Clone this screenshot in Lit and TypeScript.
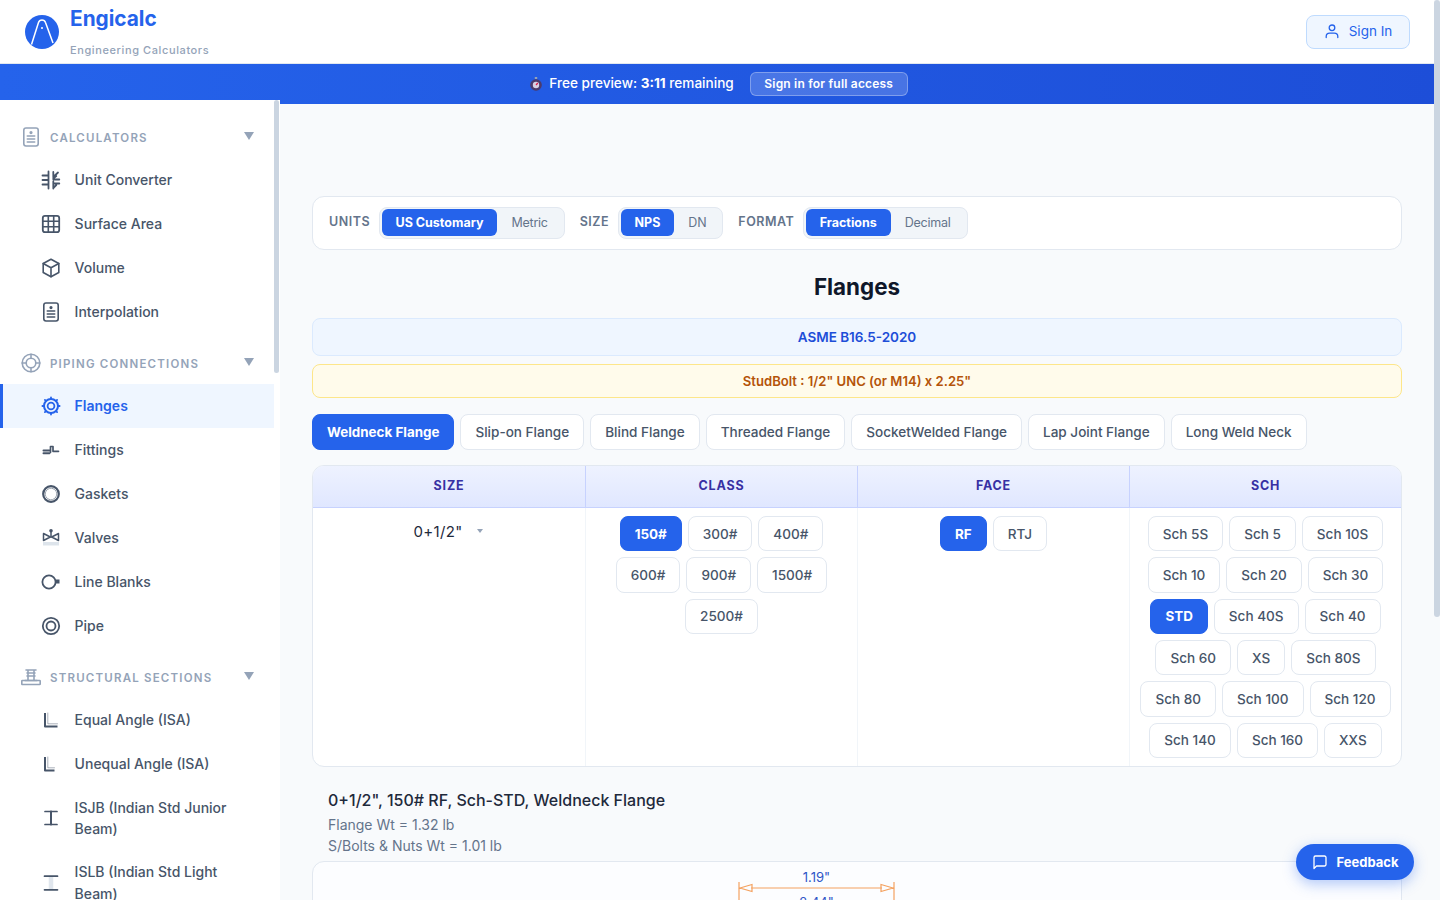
import { LitElement, html, css, svg } from "lit";
import { customElement } from "lit/decorators.js";

const icons: Record<string, unknown> = {
  doc: svg`<rect x="2.800" y="1" width="14.400" height="18" rx="2.200"/><circle cx="10" cy="5.600" r=".8" fill="currentColor"/><path d="M6.300 9h7.400M6.300 12h7.400M6.300 15h7.400"/>`,
  conv: svg`<path d="M7.500 1.500v17M12.300 2v6.500l3-2.500M12.300 11.500v7M1.500 5.500h6M1.500 10h6M1.500 14.500h6M12.300 9.500h6M12.300 13.500h6M12.300 18l3-3M17 2.500l-4.700 4.500" stroke-width="1.800"/>`,
  grid: svg`<rect x="1.800" y="1.800" width="16.400" height="16.400" rx="2.200" stroke-width="1.800"/><path d="M7.300 1.800v16.400M12.700 1.800v16.400M1.800 7.300h16.400M1.800 12.700h16.400" stroke-width="1.600"/>`,
  cube: svg`<path d="M10 1.200l7.800 4.300v9L10 18.800l-7.800-4.300v-9z"/><path d="M2.200 5.500l7.800 4.300 7.800-4.300M10 9.800v9"/>`,
  rings: svg`<circle cx="10" cy="10" r="8.800"/><circle cx="10" cy="10" r="4.800"/><path d="M10 1.200v3.600M10 15.200v3.600M1.200 10h3.600M15.200 10h3.600"/>`,
  flange: svg`<circle cx="10" cy="10" r="7" stroke-width="2"/><circle cx="10" cy="10" r="3.400" stroke-width="1.800"/><path d="M10 1.400v1.400M10 17.200v1.400M1.400 10h1.400M17.200 10h1.400M3.900 3.900l1 1M15.100 15.100l1 1M3.900 16.100l1-1M15.100 4.900l1-1" stroke-width="1.800"/>`,
  fit: svg`<path d="M2.500 10.500h6M2.500 13.200h6" stroke-width="2"/><path d="M9.500 12.200V6.500h2.500v4.800h5.500" stroke-width="1.700"/>`,
  gasket: svg`<circle cx="10" cy="10" r="7.800" stroke-width="2.200"/><circle cx="10" cy="10" r="5.700" stroke-width=".6" stroke-dasharray="1.500 1"/>`,
  valve: svg`<path d="M2.500 5.500v7l6.800-3.500zM17.500 5.500v7L10.700 9z" stroke-width="1.500"/><path d="M10 9V3.500" stroke-width="1.500"/><circle cx="10" cy="2.800" r="1.800" fill="currentColor" stroke="none"/><rect x="2" y="14" width="16" height="3.500" fill="#cbd5e1" stroke="none" opacity=".65"/>`,
  blank: svg`<circle cx="8" cy="10" r="6.600" stroke-width="1.800"/><rect x="14.500" y="7.500" width="4" height="4" fill="currentColor" stroke="none"/>`,
  pipe: svg`<circle cx="10" cy="10" r="8.200" stroke-width="1.800"/><circle cx="10" cy="10" r="4.500" stroke-width="1.800"/>`,
  beam: svg`<path d="M5 3h10M6 6h8M6 9h8M7 3v10.500M13 3v10.500M4 13.500h12"/><rect x=".8" y="13.500" width="18.400" height="4" rx=".6"/>`,
  angle: svg`<path d="M4 3v13.500h12.500" stroke-width="2" stroke-linecap="butt"/><path d="M6.800 3v10.800h9.700" stroke-width="1" opacity=".45"/>`,
  angle2: svg`<path d="M4 3v13.500h9.500" stroke-width="2" stroke-linecap="butt"/><path d="M6.800 3v10.800h6.700" stroke-width="1" opacity=".45"/>`,
  isjb: svg`<path d="M4 3.500h12M4 16.500h12" stroke-width="1.700"/><path d="M10 3.500v13" stroke-width="2"/>`,
  islb: svg`<path d="M10 3.500v13" stroke-width="4.500" stroke="#cbd5e1" stroke-linecap="butt" opacity=".6"/><path d="M3.500 3.200h13M3.500 16.800h13" stroke-width="1.700"/>`,
};
const icon = (n: string, cls = "ic") =>
  html`<svg class=${cls} viewBox="0 0 20 20" fill="none" stroke="currentColor" stroke-width="1.600" stroke-linecap="round" stroke-linejoin="round">${icons[n]}</svg>`;

type Item = { t: string; i: string; on?: boolean };
const groups: { h: string; i: string; items: Item[] }[] = [
  { h: "Calculators", i: "doc", items: [
    { t: "Unit Converter", i: "conv" }, { t: "Surface Area", i: "grid" },
    { t: "Volume", i: "cube" }, { t: "Interpolation", i: "doc" } ] },
  { h: "Piping Connections", i: "rings", items: [
    { t: "Flanges", i: "flange", on: true }, { t: "Fittings", i: "fit" }, { t: "Gaskets", i: "gasket" },
    { t: "Valves", i: "valve" }, { t: "Line Blanks", i: "blank" }, { t: "Pipe", i: "pipe" } ] },
  { h: "Structural Sections", i: "beam", items: [
    { t: "Equal Angle (ISA)", i: "angle" }, { t: "Unequal Angle (ISA)", i: "angle2" },
    { t: "ISJB (Indian Std Junior Beam)", i: "isjb" }, { t: "ISLB (Indian Std Light Beam)", i: "islb" } ] },
];
const segs: { l: string; o: string[] }[] = [
  { l: "Units", o: ["US Customary", "Metric"] },
  { l: "Size", o: ["NPS", "DN"] },
  { l: "Format", o: ["Fractions", "Decimal"] },
];
const tabs = ["Weldneck Flange", "Slip-on Flange", "Blind Flange", "Threaded Flange", "SocketWelded Flange", "Lap Joint Flange", "Long Weld Neck"];
const classes = ["150#", "300#", "400#", "600#", "900#", "1500#", "2500#"];
const faces = ["RF", "RTJ"];
const schs = ["Sch 5S", "Sch 5", "Sch 10S", "Sch 10", "Sch 20", "Sch 30", "STD", "Sch 40S", "Sch 40", "Sch 60", "XS", "Sch 80S", "Sch 80", "Sch 100", "Sch 120", "Sch 140", "Sch 160", "XXS"];

@customElement("app-root")
export class AppRoot extends LitElement {
  static styles = css`
    :host { display: block; width: 1440px; height: 900px; overflow: hidden; position: relative; font-family: Inter, "Noto Sans", sans-serif; color: #1e293b; background: #f8fafc; }
    * { box-sizing: border-box; }
    .page { display: flex; height: 900px; }
    .col { width: 1434px; display: flex; flex-direction: column; height: 900px; }
    .pagebar { width: 6px; background: #f8fafc; }
    .pagethumb { height: 617px; background: #cbd5e1; border-radius: 3px; }
    header { height: 64px; flex: none; background: #fff; display: flex; align-items: center; justify-content: space-between; padding: 0 24px 0 25px; border-bottom: 1px solid #e2e8f0; }
    .brand { display: flex; align-items: center; gap: 11px; }
    .logo { width: 34px; height: 34px; display: block; }
    .names { display: flex; flex-direction: column; gap: 10px; margin-top: -1px; }
    .name { font-size: 20.8px; line-height: 28px; font-weight: 700; color: #2563eb; }
    .sub { font-size: 11px; line-height: 14px; font-weight: 500; letter-spacing: .6px; color: #94a3b8; }
    .signin { width: 104px; height: 34px; display: flex; align-items: center; justify-content: center; gap: 9px; background: #eff6ff; border: 1px solid #bfdbfe; border-radius: 8px; color: #2563eb; font-size: 13.5px; font-family: inherit; padding: 0 0 1px; }
    .signin svg { width: 16px; height: 16px; }
    .banner { height: 40px; flex: none; background: linear-gradient(90deg, #2563eb, #1d4ed8); color: #fff; display: flex; align-items: center; justify-content: center; font-size: 13.6px; font-weight: 500; padding-left: 4px; }
    .btext { padding-bottom: 2px; }
    .watch { width: 12px; height: 14px; margin-right: 7px; }
    .banner b { font-weight: 700; }
    .full { margin-left: 16px; height: 24px; width: 158px; padding: 0 0 1px; border: 1px solid rgba(255,255,255,.3); border-radius: 6px; background: rgba(255,255,255,.18); color: #fff; font: 600 12px Inter, sans-serif; letter-spacing: .2px; }
    .body { display: flex; flex: 1; min-height: 0; }
    aside { width: 280px; flex: none; height: 800px; margin-top: -4px; position: relative; z-index: 2; background: #fff; display: flex; overflow: hidden; }
    nav { width: 274px; flex: none; padding-top: 13.6px; display: flex; flex-direction: column; gap: 6px; }
    nav > div:last-child { margin-top: .4px; }
    .sidebar-bar { width: 6px; flex: none; }
    .sidethumb { width: 5px; height: 273px; background: #cbd5e1; border-radius: 3px; }
    .ghead { height: 44px; display: flex; align-items: center; padding: 0 20px 0 21px; color: #94a3b8; }
    .ghead .hic { width: 20px; height: 20px; flex: none; margin-top: 2px; }
    .ghead span { flex: 1; margin-left: 9px; font-size: 11.5px; font-weight: 600; letter-spacing: 1.2px; text-transform: uppercase; padding-top: 4px; }
    .caret { width: 10px; height: 8px; fill: #94a3b8; }
    .item { display: flex; align-items: center; min-height: 44px; padding: 10.7px 16px 10.7px 41px; line-height: 21.6px; font-size: 14px; font-weight: 500; color: #475569; }
    .item .ic { width: 20px; height: 20px; flex: none; margin-right: 13.6px; }
    .item.on { background: #eff6ff; color: #2563eb; font-weight: 600; box-shadow: inset 3px 0 0 #2563eb; }
    main { flex: 1; min-width: 0; background: #f8fafc; padding: 92px 32px 0; display: flex; flex-direction: column; overflow: hidden; }
    .toolbar { height: 53.5px; flex: none; background: #fff; border: 1px solid #e2e8f0; border-radius: 12px; display: flex; align-items: center; padding: 0 16px; gap: 15px; }
    .field { display: flex; align-items: center; gap: 8.5px; }
    .flabel { font-size: 12.5px; font-weight: 600; letter-spacing: .5px; color: #64748b; text-transform: uppercase; padding-bottom: 2px; }
    .seg { display: flex; height: 32px; align-items: center; padding: 1px 2px; background: #f1f5f9; border: 1px solid #e2e8f0; border-radius: 8px; }
    .seg button { height: 27px; padding: 0 14px; border: 0; background: none; font: 400 12.5px Inter, sans-serif; letter-spacing: -.25px; color: #64748b; border-radius: 6px; }
    .seg button.on { background: #2563eb; color: #fff; font-weight: 700; letter-spacing: 0; }
    h1 { margin: 22.5px 0 16px; font-size: 22.4px; line-height: 30px; font-weight: 700; color: #0f172a; text-align: center; }
    .std { height: 38px; flex: none; display: flex; align-items: center; justify-content: center; background: #eff6ff; border: 1px solid #dbeafe; border-radius: 8px; font-size: 13.5px; font-weight: 600; color: #1d4ed8; }
    .bolt { height: 34px; flex: none; margin-top: 8px; display: flex; align-items: center; justify-content: center; background: #fffbeb; border: 1px solid #fde68a; border-radius: 8px; font-size: 13.1px; font-weight: 600; color: #b45309; }
    .tabs { display: flex; gap: 6px; margin-top: 16px; flex: none; }
    .tabs button { height: 36px; padding: 0 14px; background: #fff; border: 1px solid #e2e8f0; border-radius: 8px; font: 500 13.55px Inter, sans-serif; color: #475569; }
    .tabs button.on { background: #2563eb; border-color: #2563eb; color: #fff; font-weight: 700; font-size: 13.4px; }
    .table { flex: none; margin-top: 15px; background: #fff; border: 1px solid #e2e8f0; border-radius: 12px; overflow: hidden; display: grid; grid-template-columns: repeat(4, 1fr); }
    .th { height: 42px; display: flex; align-items: center; justify-content: center; padding-bottom: 2px; background: linear-gradient(180deg, #eef2ff, #e0e7ff); border-bottom: 1px solid #c7d2fe; font-size: 12.5px; font-weight: 700; letter-spacing: .8px; color: #3730a3; }
    .th + .th { border-left: 1px solid #c7d2fe; }
    .td { height: 258px; padding: 8px; display: flex; flex-wrap: wrap; gap: 6px; justify-content: center; align-content: flex-start; }
    .td + .td { border-left: 1px solid #f1f5f9; }
    .td button { height: 35.33px; padding: 0 14px; background: #fff; border: 1px solid #e2e8f0; border-radius: 8px; font: 500 13.55px Inter, sans-serif; color: #475569; white-space: nowrap; }
    .td button.on { background: #2563eb; border-color: #2563eb; color: #fff; font-weight: 700; font-size: 13.4px; }
    .sel { display: flex; align-items: center; gap: 14px; height: 30px; font-size: 15px; font-weight: 400; color: #1e293b; letter-spacing: .35px; padding-right: 2px; }
    .sel svg { width: 6px; height: 4px; fill: #94a3b8; }
    .result { padding: 20.5px 16px 0; flex: none; }
    .rtitle { font-size: 16px; line-height: 24px; font-weight: 500; color: #1e293b; margin-bottom: 2.5px; }
    .rline { font-size: 14px; line-height: 21px; color: #64748b; }
    .diagram { margin-top: 4.5px; height: 300px; flex: none; background: #fcfdff; border: 1px solid #e2e8f0; border-radius: 12px; overflow: hidden; }
    .diagram svg { display: block; width: 1088px; height: 298px; }
    .dim { stroke: #f4a261; stroke-width: 1.2; fill: none; }
    .dimt { fill: #2f55c7; font: 400 13px Inter, sans-serif; text-anchor: middle; }
    .feedback { position: absolute; left: 1296px; top: 844px; width: 118px; height: 36px; border: 0; border-radius: 18px; background: #2563eb; color: #fff; font: 700 13px Inter, sans-serif; display: flex; align-items: center; justify-content: center; gap: 9px; padding: 0 0 1px; box-shadow: 0 4px 14px rgba(37,99,235,.35); z-index: 5; }
    .feedback svg { width: 16px; height: 16px; }
  `;

  render() {
    const caret = html`<svg class="caret" viewBox="0 0 10 8"><path d="M0 0h10L5 8z"/></svg>`;
    const cell = (list: string[], on: string) => html`<div class="td">${list.map((x) => html`<button class=${x === on ? "on" : ""}>${x}</button>`)}</div>`;
    return html`
      <div class="page">
        <div class="col">
          <header>
            <div class="brand">
              <svg class="logo" viewBox="0 0 34 34">
                <circle cx="17" cy="17" r="17" fill="#2563eb"/>
                <path d="M6.500 29.500L13.500 7.500q.8-2.500 3.500-2.500t3.500 2.500L28 28M16 13h2" fill="none" stroke="#fff" stroke-width="1.500"/>
              </svg>
              <div class="names"><div class="name">Engicalc</div><div class="sub">Engineering Calculators</div></div>
            </div>
            <button class="signin">
              <svg viewBox="0 0 16 16" fill="none" stroke="currentColor" stroke-width="1.300" stroke-linecap="round"><circle cx="8" cy="4.800" r="2.800"/><path d="M2.200 14.500v-1c0-2 1.600-3.300 3.500-3.300h4.600c1.900 0 3.500 1.300 3.500 3.300v1"/></svg>
              Sign In
            </button>
          </header>
          <div class="banner">
            <svg class="watch" viewBox="0 0 12 14"><rect x="4.800" y="0" width="2.400" height="2" fill="#94a3b8"/><circle cx="6" cy="8" r="5.800" fill="#4c3a6b"/><circle cx="6" cy="8" r="3.200" fill="#d8cfe3"/><path d="M6 8l1.800-2" stroke="#e11d48" stroke-width="1.200"/></svg>
            <span class="btext">Free preview: <b>3:11</b> remaining</span>
            <button class="full">Sign in for full access</button>
          </div>
          <div class="body">
            <aside>
              <nav>
                ${groups.map((g) => html`<div>
                  <div class="ghead">${icon(g.i, "hic")}<span>${g.h}</span>${caret}</div>
                  ${g.items.map((it) => html`<div class="item ${it.on ? "on" : ""}">${icon(it.i)}<div>${it.t}</div></div>`)}
                </div>`)}
              </nav>
              <div class="sidebar-bar"><div class="sidethumb"></div></div>
            </aside>
            <main>
              <div class="toolbar">
                ${segs.map((s) => html`<div class="field"><span class="flabel">${s.l}</span><div class="seg">${s.o.map((o, i) => html`<button class=${i === 0 ? "on" : ""}>${o}</button>`)}</div></div>`)}
              </div>
              <h1>Flanges</h1>
              <div class="std">ASME B16.5-2020</div>
              <div class="bolt">StudBolt : 1/2" UNC (or M14) x 2.25"</div>
              <div class="tabs">${tabs.map((t, i) => html`<button class=${i === 0 ? "on" : ""}>${t}</button>`)}</div>
              <div class="table">
                <div class="th">SIZE</div><div class="th">CLASS</div><div class="th">FACE</div><div class="th">SCH</div>
                <div class="td"><div class="sel">0+1/2"<svg viewBox="0 0 6 4"><path d="M0 0h6L3 4z"/></svg></div></div>
                ${cell(classes, "150#")}${cell(faces, "RF")}${cell(schs, "STD")}
              </div>
              <div class="result">
                <div class="rtitle">0+1/2", 150# RF, Sch-STD, Weldneck Flange</div>
                <div class="rline">Flange Wt = 1.32 lb</div>
                <div class="rline">S/Bolts &amp; Nuts Wt = 1.01 lb</div>
              </div>
              <div class="diagram">
                <svg viewBox="0 0 1088 298">
                  <text class="dimt" x="503.500" y="20">1.19"</text>
                  <path class="dim" d="M426 20v60M581 20v60M438 26h131M427 26l12-3.500v7zM580 26l-12-3.500v7z"/>
                  <text class="dimt" x="503.500" y="45">2.44"</text>
                </svg>
              </div>
            </main>
          </div>
        </div>
        <div class="pagebar"><div class="pagethumb"></div></div>
      </div>
      <button class="feedback">
        <svg viewBox="0 0 16 16" fill="none" stroke="currentColor" stroke-width="1.300" stroke-linejoin="round"><path d="M2 3.500a1.500 1.500 0 0 1 1.500-1.500h9A1.500 1.500 0 0 1 14 3.500v7a1.500 1.500 0 0 1-1.500 1.500H4.500L2 14.500z"/></svg>
        Feedback
      </button>
    `;
  }
}
